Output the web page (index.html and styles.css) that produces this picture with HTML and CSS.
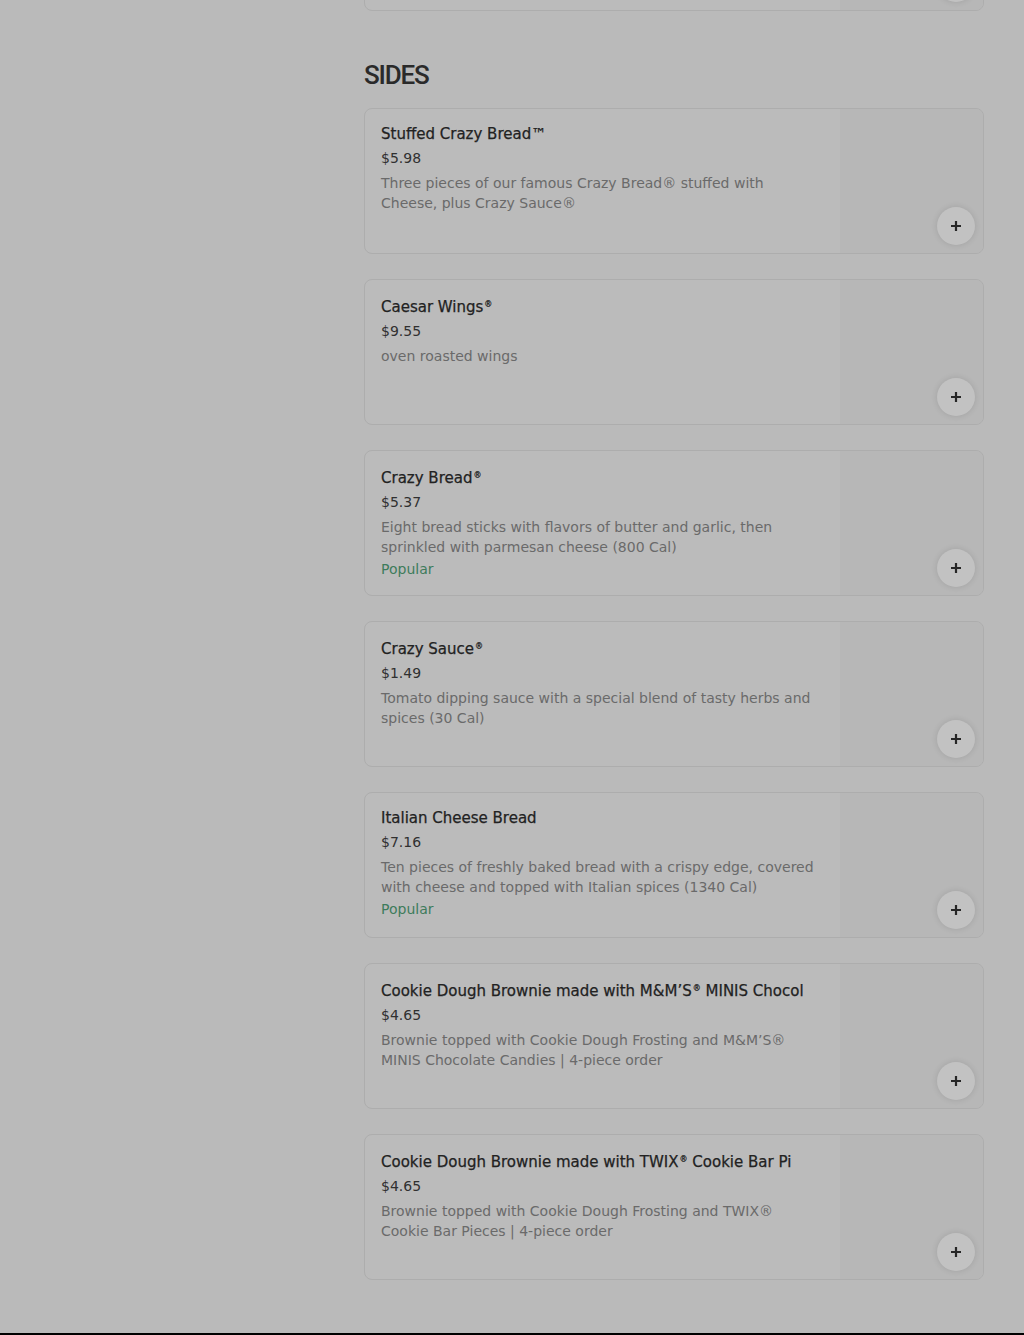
FILE: index.html
```html
<!DOCTYPE html>
<html lang="en">
<head>
<meta charset="utf-8">
<title>Sides</title>
<link rel="stylesheet" href="styles.css">
</head>
<body>
<div class="page">
  <aside class="sidebar"></aside>
  <main class="menu">
    <div class="card card-partial">
      <div class="info"></div>
      <div class="thumb"><button class="add" aria-label="Add"><svg viewBox="0 0 12 12" width="12" height="12"><path d="M6 1v10M1 6h10" stroke="currentColor" stroke-width="2.2"/></svg></button></div>
    </div>

    <h2 class="section-title">SIDES</h2>

    <ul class="items">
      <li class="card">
        <div class="info">
          <h3 class="name">Stuffed Crazy Bread™</h3>
          <div class="price">$5.98</div>
          <p class="desc">Three pieces of our famous Crazy Bread® stuffed with Cheese, plus Crazy Sauce®</p>
        </div>
        <div class="thumb"><button class="add" aria-label="Add"><svg viewBox="0 0 12 12" width="12" height="12"><path d="M6 1v10M1 6h10" stroke="currentColor" stroke-width="2.2"/></svg></button></div>
      </li>
      <li class="card">
        <div class="info">
          <h3 class="name">Caesar Wings<span class="reg">®</span></h3>
          <div class="price">$9.55</div>
          <p class="desc">oven roasted wings</p>
        </div>
        <div class="thumb"><button class="add" aria-label="Add"><svg viewBox="0 0 12 12" width="12" height="12"><path d="M6 1v10M1 6h10" stroke="currentColor" stroke-width="2.2"/></svg></button></div>
      </li>
      <li class="card">
        <div class="info">
          <h3 class="name">Crazy Bread<span class="reg">®</span></h3>
          <div class="price">$5.37</div>
          <p class="desc">Eight bread sticks with flavors of butter and garlic, then sprinkled with parmesan cheese (800 Cal)</p>
          <div class="tag">Popular</div>
        </div>
        <div class="thumb"><button class="add" aria-label="Add"><svg viewBox="0 0 12 12" width="12" height="12"><path d="M6 1v10M1 6h10" stroke="currentColor" stroke-width="2.2"/></svg></button></div>
      </li>
      <li class="card">
        <div class="info">
          <h3 class="name">Crazy Sauce<span class="reg">®</span></h3>
          <div class="price">$1.49</div>
          <p class="desc">Tomato dipping sauce with a special blend of tasty herbs and spices (30 Cal)</p>
        </div>
        <div class="thumb"><button class="add" aria-label="Add"><svg viewBox="0 0 12 12" width="12" height="12"><path d="M6 1v10M1 6h10" stroke="currentColor" stroke-width="2.2"/></svg></button></div>
      </li>
      <li class="card">
        <div class="info">
          <h3 class="name">Italian Cheese Bread</h3>
          <div class="price">$7.16</div>
          <p class="desc">Ten pieces of freshly baked bread with a crispy edge, covered with cheese and topped with Italian spices (1340 Cal)</p>
          <div class="tag">Popular</div>
        </div>
        <div class="thumb"><button class="add" aria-label="Add"><svg viewBox="0 0 12 12" width="12" height="12"><path d="M6 1v10M1 6h10" stroke="currentColor" stroke-width="2.2"/></svg></button></div>
      </li>
      <li class="card">
        <div class="info">
          <h3 class="name">Cookie Dough Brownie made with M&amp;M’S<span class="reg">®</span> MINIS Chocol</h3>
          <div class="price">$4.65</div>
          <p class="desc">Brownie topped with Cookie Dough Frosting and M&amp;M’S® MINIS Chocolate Candies | 4-piece order</p>
        </div>
        <div class="thumb"><button class="add" aria-label="Add"><svg viewBox="0 0 12 12" width="12" height="12"><path d="M6 1v10M1 6h10" stroke="currentColor" stroke-width="2.2"/></svg></button></div>
      </li>
      <li class="card">
        <div class="info">
          <h3 class="name">Cookie Dough Brownie made with TWIX<span class="reg">®</span> Cookie Bar Pi</h3>
          <div class="price">$4.65</div>
          <p class="desc">Brownie topped with Cookie Dough Frosting and TWIX® Cookie Bar Pieces | 4-piece order</p>
        </div>
        <div class="thumb"><button class="add" aria-label="Add"><svg viewBox="0 0 12 12" width="12" height="12"><path d="M6 1v10M1 6h10" stroke="currentColor" stroke-width="2.2"/></svg></button></div>
      </li>
    </ul>
  </main>
</div>
<footer class="footer"></footer>
</body>
</html>
```

FILE: styles.css
```css
* { box-sizing: border-box; }

html, body {
  margin: 0;
  padding: 0;
  background: #bababa;
  font-family: "DejaVu Sans", "Noto Sans", sans-serif;
  color: #2c2c2c;
  overflow: hidden;
}

.page {
  display: grid;
  grid-template-columns: 364px 620px;
}

.menu {
  display: flex;
  flex-direction: column;
}

.section-title {
  margin: 41px 0 0;
  height: 46px;
  font-family: "Roboto", "Liberation Sans", sans-serif;
  font-weight: 500;
  font-size: 26px;
  line-height: 46px;
  letter-spacing: -1.2px;
  color: #2a2a2a;
}

.items {
  list-style: none;
  margin: 10px 0 0;
  padding: 0;
  display: flex;
  flex-direction: column;
  gap: 25px;
}

.card {
  display: flex;
  height: 146px;
  border: 1px solid #adadad;
  border-radius: 8px;
  background: #bbbbbb;
  overflow: hidden;
}

.card-partial {
  margin-top: -135px;
}

.info {
  flex: 1;
  min-width: 0;
  padding: 14px 0 0 16px;
}

.name {
  margin: 0;
  width: 440px;
  font-size: 15px;
  font-weight: 400;
  line-height: 22px;
  color: #222222;
  -webkit-text-stroke: 0.25px #222222;
  white-space: nowrap;
  overflow: hidden;
}

.reg {
  font-size: 8px;
  vertical-align: 5px;
  margin-left: 1px;
}

.price {
  margin-top: 4px;
  font-size: 14px;
  line-height: 18px;
  color: #303030;
}

.desc {
  margin: 6px 0 0;
  width: 440px;
  font-size: 14px;
  line-height: 20px;
  color: #6a6a6a;
}

.tag {
  margin-top: 2px;
  font-size: 14px;
  line-height: 20px;
  color: #3e7c5c;
}

.thumb {
  width: 143px;
  flex: none;
  background: #b7b7b7;
  display: flex;
  align-items: flex-end;
  justify-content: flex-end;
  padding: 0 8px 8px 0;
}

.add {
  width: 38px;
  height: 38px;
  border-radius: 50%;
  border: none;
  padding: 0;
  background: #c2c2c2;
  color: #262626;
  box-shadow: 0 0 6px rgba(0, 0, 0, 0.12);
  display: flex;
  align-items: center;
  justify-content: center;
}

.footer {
  margin-top: 53px;
  height: 40px;
  background: #000;
}
```
